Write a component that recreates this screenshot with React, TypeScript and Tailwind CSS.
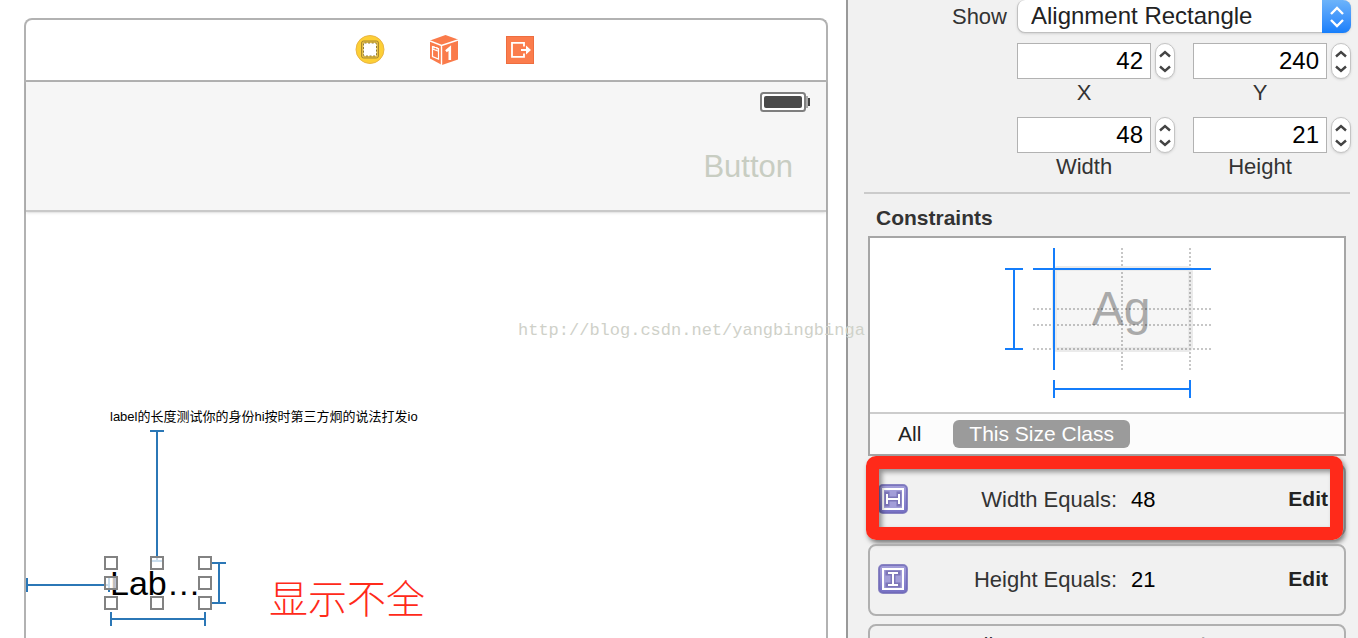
import { useState } from "react";

const sans = "font-['Liberation_Sans','Noto_Sans_CJK_SC',sans-serif]";

function ViewControllerIcon() {
    return (
        <svg width="30" height="30" viewBox="0 0 30 30" aria-hidden="true">
            <circle cx="15" cy="14.5" r="14" fill="#fdcf35" stroke="#e9b545" />
            <rect x="6.5" y="6" width="17" height="17" rx="2" fill="#e3bd48" stroke="#a98a2c" />
            <rect x="8.5" y="8" width="13" height="13" rx="1" fill="#fff" stroke="#8f7a30" strokeDasharray="2 1.6" />
        </svg>
    );
}

function FirstResponderIcon() {
    return (
        <svg width="31" height="32" viewBox="1 0 31 32" aria-hidden="true">
            <path d="M1 6.5 16.5 1 29 5.5V25.5L13 31 1 24.5Z" fill="#fa7b4b" />
            <path d="M1 7 12.5 11.5 29 6M12.5 11.5V31" fill="none" stroke="#fff" strokeWidth="1.4" />
            <path d="M3.5 12.5 9.5 14.5V25L3.5 22.5ZM3.5 15 9.5 17.2M5 12V14.5M8 13V15.5" fill="none" stroke="#fff" strokeWidth="1.2" />
            <path d="M17 17.2 20.8 14V26" fill="none" stroke="#fff" strokeWidth="2.6" />
        </svg>
    );
}

function ExitIcon() {
    return (
        <svg width="28" height="28" viewBox="0 0 28 28" aria-hidden="true">
            <rect x="0.5" y="0.5" width="27" height="27" fill="#fb7c4c" stroke="#ee6d3f" />
            <path d="M18 10.5V6.8H6V20.8H18V17.5" fill="none" stroke="#fff" strokeWidth="1.8" />
            <path d="M15 14H21" stroke="#fff" strokeWidth="2" />
            <path d="M20 9.5 25 14 20 18.5Z" fill="#fff" />
        </svg>
    );
}

function Battery() {
    return (
        <svg className="block" width="50" height="20" viewBox="0 0 50 20" role="img" aria-label="Battery full">
            <rect x="1" y="1" width="44" height="18" rx="2.5" fill="#fff" stroke="#7f7f7f" strokeWidth="2" />
            <rect x="4" y="4" width="38" height="12" rx="2" fill="#4a4a4a" />
            <path d="M47 4v12" stroke="#aaa" strokeWidth="2" />
            <path d="M49 6v8" stroke="#444" strokeWidth="2" />
        </svg>
    );
}

// Constraint kind badge, the same bar glyph turned for width and height
function ConstraintIcon({ kind }: { kind: "width" | "height" }) {
    const bars = kind === "width" ? "M9 10V20M21 10V20M9 15H21" : "M10 9H20M10 21H20M15 9V21";
    const fill = `badge-${kind}`;
    return (
        <svg className="shrink-0" width="30" height="30" viewBox="0 0 30 30" aria-hidden="true">
            <defs>
                <linearGradient id={fill} x1="0" y1="0" x2="0" y2="1">
                    <stop offset="0" stopColor="#a5a0da" />
                    <stop offset="1" stopColor="#7670c4" />
                </linearGradient>
            </defs>
            <rect x="1" y="1" width="28" height="28" rx="4" fill={`url(#${fill})`} stroke="#6f69b6" strokeOpacity="0.8" strokeWidth="2" />
            <rect x="5" y="5" width="20" height="20" fill="#a39ed8" />
            <path d={bars} fill="none" stroke="#7d76b8" strokeWidth="5" strokeLinecap="square" />
            <rect x="5" y="5" width="20" height="20" fill="none" stroke="#fff" strokeWidth="2" />
            <path d={bars} fill="none" stroke="#fff" strokeWidth="2" />
        </svg>
    );
}

function ConstraintDiagram() {
    return (
        <svg className="mx-auto block" width="208" height="150" viewBox="-2 0 208 150" role="img" aria-label="Constraint diagram">
            <rect x="49.5" y="20.5" width="136" height="81" rx="3" fill="#f6f6f6" stroke="#ebebeb" strokeWidth="5" />
            <text x="116" y="77" textAnchor="middle" fontSize="48" fill="#aaa">Ag</text>
            <path
                d="M117 0V122M185 0V122M28 61H206M28 77H206M28 101H206"
                stroke="#000" strokeOpacity="0.22" strokeWidth="2" strokeDasharray="2 2"
            />
            <path
                d="M49 0V122M28 21H206M0 21H18M9 21V101M0 101H18M49 132V150M185 132V150M49 141H185"
                fill="none" stroke="#147dfb" strokeWidth="2"
            />
        </svg>
    );
}

function Chevron({ d }: { d: string }) {
    return (
        <svg width="12" height="8" viewBox="0 0 12 8" fill="none" stroke="#444" strokeWidth="2.4" aria-hidden="true">
            <path d={d} />
        </svg>
    );
}

function NumberField({ id, label, value }: { id: string; label: string; value: number }) {
    const [current, setCurrent] = useState(String(value));
    const step = (by: number) => setCurrent(String(Number(current) + by));
    return (
        <div className="flex gap-1">
            <div className="flex min-w-0 flex-1 flex-col">
                <input
                    id={id}
                    className="h-9 w-full border border-[#b2b2b2] bg-white pr-[7px] text-right text-2xl leading-8 text-black outline-none"
                    value={current}
                    onChange={(e) => setCurrent(e.target.value)}
                />
                <label htmlFor={id} className="text-center text-[22px] leading-7">{label}</label>
            </div>
            <div className="flex h-9 w-5 flex-col overflow-hidden rounded-full border border-[#c4c4c4] bg-white shadow-sm">
                <button type="button" aria-label={`Increase ${label}`} className="flex flex-1 items-center justify-center pt-0.5" onClick={() => step(1)}>
                    <Chevron d="M1 6.5 6 2 11 6.5" />
                </button>
                <button type="button" aria-label={`Decrease ${label}`} className="flex flex-1 items-center justify-center pb-0.5" onClick={() => step(-1)}>
                    <Chevron d="M1 1.5 6 6 11 1.5" />
                </button>
            </div>
        </div>
    );
}

function ConstraintRow({ kind, label, value, marked }: { kind: "width" | "height"; label: string; value: string; marked?: boolean }) {
    return (
        <li className="relative flex h-[72px] items-center rounded-lg border-2 border-[#b0b0b0] pr-4 pb-0.5 pl-2">
            <ConstraintIcon kind={kind} />
            <span className="w-[209px] text-right text-[22px]">{label}</span>
            <span className="ml-3.5 flex-1 text-[22px] text-black">{value}</span>
            <button type="button" className="text-[21px] font-bold text-[#222]">Edit</button>
            {marked && (
                <div className="pointer-events-none absolute -top-2.5 right-px -bottom-1.5 -left-1 rounded-[10px] border-[13px] border-[#ff2a1a] shadow-[2px_3px_5px_rgba(0,0,0,0.5)]">
                    <div className="h-full shadow-[inset_3px_3px_5px_rgba(0,0,0,0.4)]" />
                </div>
            )}
        </li>
    );
}

const handles = [
    [78, 344], [124, 344], [172, 344],
    [78, 364], [172, 364],
    [78, 384], [124, 384], [172, 384],
];

function Canvas() {
    return (
        <div className="relative flex-1">
            <span className="absolute top-[195px] left-[84px] text-[13px] leading-5 whitespace-nowrap text-black">
                label的长度测试你的身份hi按时第三方炯的说法打发io
            </span>
            <span className="absolute top-[351px] left-[84px] text-[34px] leading-10 whitespace-nowrap text-black">Lab…</span>
            <svg className="absolute top-0 left-0" width="240" height="430" viewBox="0 0 240 430" aria-hidden="true">
                <path
                    d="M124 219H138M131 219V349M124 349H138M1 366V380M1 373H83M83 366V380M85 400V414M85 407H179M179 400V414M186 351H200M193 351V391M186 391H200"
                    fill="none" stroke="#2b77b6" strokeWidth="2"
                />
                {handles.map(([x, y]) => (
                    <rect key={`${x}-${y}`} x={x + 1} y={y + 1} width="12" height="12" fill="#fff" fillOpacity="0.75" stroke="#828282" strokeWidth="2" />
                ))}
            </svg>
            <span className="absolute top-[364px] left-[243px] text-[39px] leading-12 font-light whitespace-nowrap text-[#ff2a1a]">显示不全</span>
        </div>
    );
}

export default function App() {
    return (
        <div className={`relative flex h-screen overflow-hidden bg-white text-[#333] ${sans}`}>
            <main className="flex min-w-0 flex-1 flex-col pt-[18px] pr-[18px] pl-6">
                <div className="flex flex-1 flex-col rounded-t-lg border-2 border-b-0 border-[#b2b2b2]">
                    <div className="flex h-[62px] items-center justify-center gap-[45px] border-b-2 border-[#b2b2b2] pl-[37px]">
                        <ViewControllerIcon />
                        <FirstResponderIcon />
                        <ExitIcon />
                    </div>
                    <header className="flex h-[130px] flex-col items-end border-b-2 border-[#c9c9c9] bg-[#f6f6f6] pt-2.5 shadow-sm">
                        <div className="pr-4">
                            <Battery />
                        </div>
                        <button type="button" className="mt-[37px] mr-[33px] text-[31px] leading-9 text-[#c8cdc2]">
                            Button
                        </button>
                    </header>
                    <Canvas />
                </div>
            </main>

            <aside className="w-[512px] shrink-0 border-l-2 border-[#999] bg-[#f1f1f1] pl-4">
                <div className="flex items-center pr-[7px]">
                    <label htmlFor="show" className="w-[143px] text-right text-[22px]">Show</label>
                    <div className="relative ml-2.5 flex-1">
                        <select
                            id="show"
                            className="block h-[33px] w-full appearance-none rounded-lg border border-t-0 border-[#c0c0c0] bg-white pl-[13px] text-2xl leading-8 text-[#222] shadow-sm"
                        >
                            <option>Alignment Rectangle</option>
                            <option>Frame Rectangle</option>
                        </select>
                        <span className="pointer-events-none absolute inset-y-0 right-0 flex w-[29px] items-center justify-center rounded-r-lg bg-linear-to-b from-[#6cb3fa] to-[#157efb]">
                            <svg width="14" height="22" viewBox="0 0 14 22" fill="none" stroke="#fff" strokeWidth="2.4" aria-hidden="true">
                                <path d="M1 8 7 2 13 8M1 14 7 20 13 14" />
                            </svg>
                        </span>
                    </div>
                </div>

                <div className="mt-2.5 grid grid-cols-2 gap-x-[18px] gap-y-2.5 pr-[7px] pl-[153px]">
                    <NumberField id="x" label="X" value={42} />
                    <NumberField id="y" label="Y" value={240} />
                    <NumberField id="width" label="Width" value={48} />
                    <NumberField id="height" label="Height" value={21} />
                </div>

                <hr className="mt-[11px] mr-2 border-t-2 border-[#cbcbcb]" />

                <h2 className="pt-2 pb-0.5 pl-3 text-[21px] leading-8 font-bold">Constraints</h2>

                <section className="mr-3 ml-1 border-2 border-[#a6a6a6] bg-white">
                    <div className="pt-2.5 pb-3.5">
                        <ConstraintDiagram />
                    </div>
                    <div className="flex h-[42px] items-center gap-8 border-t-2 border-[#ccc] bg-[#fcfcfc] pl-7">
                        <button type="button" className="text-[21px] text-[#222]">All</button>
                        <button type="button" className="h-7 rounded-md bg-[#9b9b9b] px-4 text-[21px] leading-7 text-white">This Size Class</button>
                    </div>
                </section>

                <ul className="mt-2 mr-3 ml-1 flex flex-col gap-2">
                    <ConstraintRow kind="width" label="Width Equals:" value="48" marked />
                    <ConstraintRow kind="height" label="Height Equals:" value="21" />
                    <li className="flex h-[72px] rounded-lg border-2 border-[#b0b0b0] pt-1 pl-[38px] text-[22px] leading-8">
                        <span className="w-[209px] text-right">Leading Space to:</span>
                        <span className="ml-3.5 text-[#aaa]">Superview</span>
                    </li>
                </ul>
            </aside>

            <span className="pointer-events-none absolute top-[319px] left-[518px] font-['Liberation_Mono',monospace] text-[17px] leading-6 whitespace-nowrap text-[#cfd1c9]">
                http://blog.csdn.net/yangbingbinga
            </span>
        </div>
    );
}
